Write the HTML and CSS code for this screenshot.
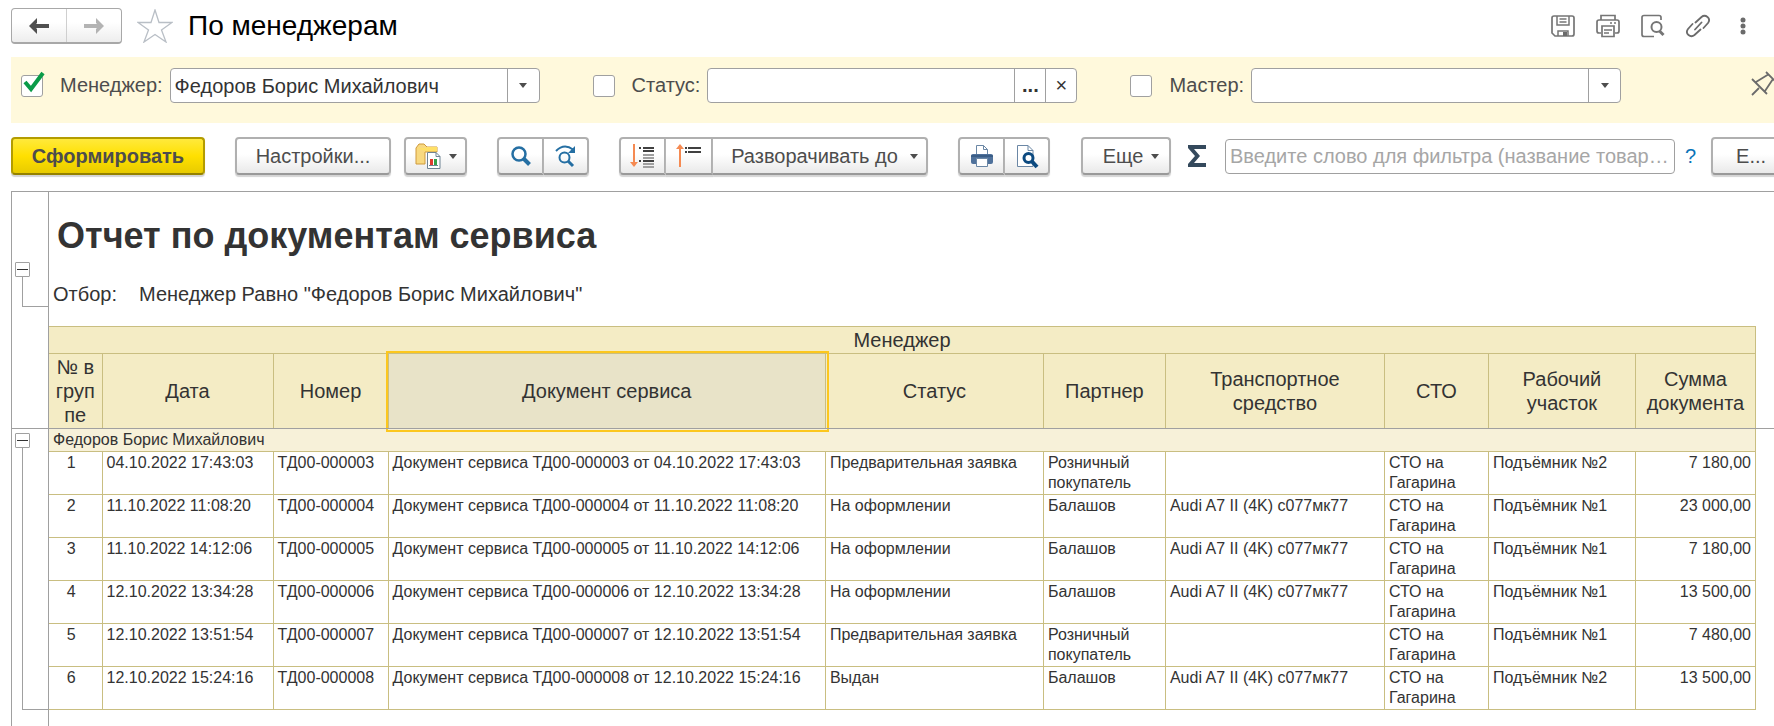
FILE: index.html
```html
<!DOCTYPE html>
<html lang="ru">
<head>
  <meta charset="UTF-8">
  <title>По менеджерам</title>
  <meta name="viewport" content="width=device-width, initial-scale=1.0">
  <link rel="stylesheet" href="styles.css">
</head>
<body>

  <header class="topbar">
    <div class="nav">
      <button class="nav-btn" type="button" aria-label="Назад">
        <svg width="22" height="18" viewBox="0 0 22 18"><path d="M9 1 1 9l8 8v-5l-1-1h13V7H8l1-1z" fill="#505050"/></svg>
      </button>
      <button class="nav-btn" type="button" aria-label="Вперед">
        <svg width="22" height="18" viewBox="0 0 22 18"><path d="M13 1l8 8-8 8v-5l1-1H1V7h13l-1-1z" fill="#b3b3b3"/></svg>
      </button>
    </div>
    <button class="icon-btn star" type="button" aria-label="В избранное">
      <svg width="36" height="34" viewBox="0 0 36 34"><path d="M18 1l4 12.500h13l-10.500 7.500 4.500 12-11-7.500-11 7.500L11.500 21 1 13.500h13z" fill="#fff" stroke="#b9bfc6" stroke-width="1.300"/></svg>
    </button>
    <h1 class="page-title">По менеджерам</h1>
    <div class="top-icons">
      <button class="icon-btn" type="button" aria-label="Сохранить">
        <svg width="26" height="24" viewBox="0 0 26 24" fill="none" stroke="#757575" stroke-width="1.700"><path d="M2 4q0-2 2-2h18q2 0 2 2v16q0 2-2 2H5l-3-3z"/><path d="M7 2v9h12V2M9.500 5h7M9.500 8h7M8 22v-5h10v5" stroke-width="1.500"/><path d="M13 18h4v4h-4z" fill="#6b6b6b" stroke="none"/></svg>
      </button>
      <button class="icon-btn" type="button" aria-label="Печать">
        <svg width="26" height="24" viewBox="0 0 26 24" fill="none" stroke="#757575" stroke-width="1.700"><path d="M6 6V1.500h14V6M6 19H4q-2 0-2-2V8q0-2 2-2h18q2 0 2 2v9q0 2-2 2h-2"/><path d="M7 12h12v10.500H7z"/><path d="M9 16h8M9 19h5M15 9h2M19 9h2" stroke-width="1.500"/></svg>
      </button>
      <button class="icon-btn" type="button" aria-label="Просмотр">
        <svg width="26" height="24" viewBox="0 0 26 24" fill="none" stroke="#757575" stroke-width="2"><path d="M21 6V3.500q0-2-2-2H4q-2 0-2 2v17q0 2 2 2h10" stroke-width="1.700"/><circle cx="16.500" cy="13" r="5"/><path d="M19.500 17l4 4" stroke-width="3"/></svg>
      </button>
      <button class="icon-btn" type="button" aria-label="Ссылка">
        <svg width="26" height="24" viewBox="0 0 26 24" fill="none" stroke="#6b6b6b" stroke-width="1.800" stroke-linecap="round"><path d="M10.500 8.500l6-5.500q3-2.500 6 0t.500 6l-4.500 5M15.500 15.500l-6 5.500q-3 2.500-6 0t-.500-6l4.500-5M10 15.500l6.500-7"/></svg>
      </button>
      <button class="icon-btn" type="button" aria-label="Меню">
        <svg width="26" height="24" viewBox="0 0 26 24" fill="#6b6b6b"><circle cx="13" cy="6" r="2.500"/><circle cx="13" cy="12" r="2.500"/><circle cx="13" cy="18" r="2.500"/></svg>
      </button>
    </div>
  </header>

  <section class="filters">
    <div class="filter">
      <label class="check">
        <input type="checkbox" checked aria-label="Использовать отбор: Менеджер">
        <svg class="tick" width="24" height="24" viewBox="0 0 24 24"><path d="M3 11l6 7L21 2" fill="none" stroke="#0a9b48" stroke-width="4"/></svg>
      </label>
      <label class="filter-label" for="manager">Менеджер:</label>
      <div class="field">
        <select id="manager"><option>Федоров Борис Михайлович</option></select>
        <span class="drop"><span class="caret"></span></span>
      </div>
    </div>
    <div class="filter">
      <label class="check">
        <input type="checkbox" aria-label="Использовать отбор: Статус">
      </label>
      <label class="filter-label" for="status">Статус:</label>
      <div class="field">
        <input class="field-text" type="text" id="status">
        <button class="field-btn dots" type="button">...</button>
        <button class="field-btn" type="button" aria-label="Очистить">×</button>
      </div>
    </div>
    <div class="filter">
      <label class="check">
        <input type="checkbox" aria-label="Использовать отбор: Мастер">
      </label>
      <label class="filter-label" for="master">Мастер:</label>
      <div class="field">
        <select id="master"><option></option></select>
        <span class="drop"><span class="caret"></span></span>
      </div>
    </div>
    <button class="icon-btn pin" type="button" aria-label="Закрепить">
      <svg width="26" height="26" viewBox="0 0 26 26" fill="none" stroke="#6b6b6b" stroke-width="1.800"><path d="M1 8l15 15M5 11l13-8M15 1l10 10M14 20l8-12M1 24l7-7"/></svg>
    </button>
  </section>

  <div class="toolbar">
    <button class="btn btn-main" type="button">Сформировать</button>
    <button class="btn btn-settings" type="button">Настройки...</button>
    <button class="btn btn-folder" type="button" aria-label="Варианты отчета">
      <svg width="26" height="26" viewBox="0 0 26 26"><path d="M1 5l3-4h5l3 3h10v5H10v12H1z" fill="#f8d980" stroke="#cf9a3c"/><path d="M2 5h9l1-1h10v4H10" fill="#ffe066"/><path d="M12.500 9.500H21l4 4v12H12.500z" fill="#fff" stroke="#6f8493"/><path d="M21 9.500v4h4" fill="none" stroke="#6f8493"/><path d="M15 16h3v6h-3z" fill="#e03a2f"/><path d="M19 16h3v6h-3z" fill="#35a04a"/><path d="M14 22.500h9" stroke="#6f8493"/></svg>
      <span class="caret"></span>
    </button>
    <div class="group group-find">
      <button class="btn" type="button" aria-label="Найти">
        <svg width="22" height="22" viewBox="0 0 22 22" fill="none" stroke="#256fa3"><circle cx="9" cy="9" r="6.500" stroke-width="2.500"/><path d="M13.500 13.500l6 6" stroke-width="4"/></svg>
      </button>
      <button class="btn" type="button" aria-label="Найти далее">
        <svg width="24" height="24" viewBox="0 0 24 24" fill="none" stroke="#256fa3"><path d="M2 7q8-8 17-1.500" stroke-width="2"/><path d="M21 2v7h-7z" fill="#256fa3" stroke="none"/><circle cx="10.500" cy="13.500" r="5" stroke-width="2"/><path d="M14 17l5 5" stroke-width="3"/></svg>
      </button>
    </div>
    <div class="group group-levels">
      <button class="btn" type="button" aria-label="Развернуть все">
        <svg width="26" height="26" viewBox="0 0 26 26"><path d="M4 1v20" stroke="#f58a52" stroke-width="2"/><path d="M0 19h8l-4 5z" fill="#f58a52"/><path d="M9 5h2M9 18h2M13 5h11M13 8h11M13 18h11" stroke="#404040" stroke-width="2"/><path d="M13 12h11M13 15h11M13 21h11M13 24h11" stroke="#a0a0a0" stroke-width="2"/></svg>
      </button>
      <button class="btn" type="button" aria-label="Свернуть все">
        <svg width="26" height="26" viewBox="0 0 26 26"><path d="M4 4v20" stroke="#f58a52" stroke-width="2"/><path d="M0 6h8L4 1z" fill="#f58a52"/><path d="M9 5h2M9 9h2M12 5h13M12 9h13" stroke="#404040" stroke-width="2"/></svg>
      </button>
      <button class="btn btn-expand" type="button">Разворачивать до <span class="caret"></span></button>
    </div>
    <div class="group group-print">
      <button class="btn" type="button" aria-label="Печать">
        <svg width="24" height="24" viewBox="0 0 24 24"><path d="M6.500 11V1.500h7l4 4V11" fill="#fff" stroke="#6b87a5"/><path d="M13.500 1.500v4h4" fill="none" stroke="#6b87a5"/><rect x="1" y="10" width="22" height="10" rx="2" fill="#4f719b"/><path d="M1 12h22" stroke="#274a73"/><path d="M6.500 14.500h11v8h-11z" fill="#fff" stroke="#6b87a5"/></svg>
      </button>
      <button class="btn" type="button" aria-label="Предварительный просмотр">
        <svg width="24" height="26" viewBox="0 0 24 26" fill="none"><path d="M2.500 2.500H13l5 5v16H2.500z" fill="#fff" stroke="#6b87a5"/><path d="M13 2.500v5h5" stroke="#6b87a5"/><circle cx="13.500" cy="15" r="4.500" fill="#fff" stroke="#0c4a80" stroke-width="3"/><path d="M17 18.500l5 5.500" stroke="#0c4a80" stroke-width="4"/></svg>
      </button>
    </div>
    <button class="btn btn-more" type="button">Еще <span class="caret"></span></button>
    <button class="icon-btn sigma" type="button" aria-label="Сумма">
      <svg width="18" height="22" viewBox="0 0 18 22"><path d="M0 0h18v4H6l6 7-6 7h12v4H0v-3l7-8-7-8z" fill="#34495c"/></svg>
    </button>
    <input class="search" type="text" aria-label="Фильтр" placeholder="Введите слово для фильтра (название товара, номер)">
    <a class="help" href="#">?</a>
    <button class="btn btn-last" type="button">Е...</button>
  </div>

  <main class="report">
    <div class="gutter">
      <div class="tree tree-head">
        <button class="toggle" type="button" aria-label="Свернуть заголовок"></button>
        <div class="branch"></div>
      </div>
      <div class="tree tree-body">
        <button class="toggle" type="button" aria-label="Свернуть группу"></button>
        <div class="branch"></div>
      </div>
    </div>
    <div class="sheet">
      <h2 class="report-title">Отчет по документам сервиса</h2>
      <p class="selection"><span class="selection-name">Отбор:</span>Менеджер Равно "Федоров Борис Михайлович"</p>
      <table class="data">
        <colgroup>
          <col class="c-num"><col class="c-date"><col class="c-code"><col class="c-doc"><col class="c-status">
          <col class="c-partner"><col class="c-car"><col class="c-sto"><col class="c-place"><col class="c-sum">
        </colgroup>
        <thead>
          <tr class="row-top"><th colspan="10">Менеджер</th></tr>
          <tr class="row-cols">
            <th>№ в<br>груп<br>пе</th>
            <th>Дата</th>
            <th>Номер</th>
            <th class="current">Документ сервиса</th>
            <th>Статус</th>
            <th>Партнер</th>
            <th>Транспортное средство</th>
            <th>СТО</th>
            <th>Рабочий участок</th>
            <th>Сумма документа</th>
          </tr>
        </thead>
        <tbody>
          <tr class="row-group"><td colspan="10">Федоров Борис Михайлович</td></tr>
          <tr><td>1</td><td>04.10.2022 17:43:03</td><td>ТД00-000003</td><td>Документ сервиса ТД00-000003 от 04.10.2022 17:43:03</td><td>Предварительная заявка</td><td>Розничный покупатель</td><td></td><td>СТО на Гагарина</td><td>Подъёмник №2</td><td>7 180,00</td></tr>
          <tr><td>2</td><td>11.10.2022 11:08:20</td><td>ТД00-000004</td><td>Документ сервиса ТД00-000004 от 11.10.2022 11:08:20</td><td>На оформлении</td><td>Балашов</td><td>Audi A7 II (4K) с077мк77</td><td>СТО на Гагарина</td><td>Подъёмник №1</td><td>23 000,00</td></tr>
          <tr><td>3</td><td>11.10.2022 14:12:06</td><td>ТД00-000005</td><td>Документ сервиса ТД00-000005 от 11.10.2022 14:12:06</td><td>На оформлении</td><td>Балашов</td><td>Audi A7 II (4K) с077мк77</td><td>СТО на Гагарина</td><td>Подъёмник №1</td><td>7 180,00</td></tr>
          <tr><td>4</td><td>12.10.2022 13:34:28</td><td>ТД00-000006</td><td>Документ сервиса ТД00-000006 от 12.10.2022 13:34:28</td><td>На оформлении</td><td>Балашов</td><td>Audi A7 II (4K) с077мк77</td><td>СТО на Гагарина</td><td>Подъёмник №1</td><td>13 500,00</td></tr>
          <tr><td>5</td><td>12.10.2022 13:51:54</td><td>ТД00-000007</td><td>Документ сервиса ТД00-000007 от 12.10.2022 13:51:54</td><td>Предварительная заявка</td><td>Розничный покупатель</td><td></td><td>СТО на Гагарина</td><td>Подъёмник №1</td><td>7 480,00</td></tr>
          <tr><td>6</td><td>12.10.2022 15:24:16</td><td>ТД00-000008</td><td>Документ сервиса ТД00-000008 от 12.10.2022 15:24:16</td><td>Выдан</td><td>Балашов</td><td>Audi A7 II (4K) с077мк77</td><td>СТО на Гагарина</td><td>Подъёмник №2</td><td>13 500,00</td></tr>
        </tbody>
      </table>
    </div>
    <div class="freeze-line"></div>
  </main>

</body>
</html>
```

FILE: styles.css
```css
* {
  box-sizing: border-box;
}
body {
  margin: 0;
  padding-left: 11px;
  min-height: 100vh;
  display: flex;
  flex-direction: column;
  overflow: hidden;
  background: #fff;
  color: #333;
  font-family: "Liberation Sans", Arial, sans-serif;
  font-size: 20px;
}
button, input, select {
  font-family: inherit;
  font-size: inherit;
  color: inherit;
  margin: 0;
}
svg {
  display: block;
  flex: none;
}
.icon-btn {
  padding: 0;
  border: none;
  background: none;
  cursor: pointer;
}

/* title row */
.topbar {
  display: flex;
  align-items: center;
  height: 57px;
  padding-right: 18px;
  padding-bottom: 5px;
}
.nav {
  display: flex;
  width: 111px;
  height: 36px;
  border: 1px solid #a8a8a8;
  border-bottom-width: 2px;
  border-radius: 4px;
  background: linear-gradient(#fff 40%, #ededed);
}
.nav-btn {
  flex: 1;
  display: flex;
  justify-content: center;
  align-items: center;
  padding: 0;
  border: none;
  background: none;
}
.nav-btn + .nav-btn {
  border-left: 1px solid #cfcfcf;
}
.star {
  margin-left: 15px;
}
.page-title {
  margin: 0 0 0 15px;
  font-size: 28px;
  font-weight: normal;
  color: #000;
}
.top-icons {
  display: flex;
  gap: 19px;
  margin-left: auto;
}

/* quick filters */
.filters {
  display: flex;
  align-items: flex-start;
  height: 66px;
  padding: 11px 0 0 10px;
  background: #fff9dc;
  overflow: hidden;
}
.filter {
  display: flex;
  align-items: center;
  flex: none;
  margin-right: 53px;
}
.check {
  position: relative;
  width: 22px;
  height: 22px;
}
.check input {
  display: block;
  width: 22px;
  height: 22px;
  appearance: none;
  border: 1px solid #a0a0a0;
  border-radius: 3px;
  background: #fff;
}
.tick {
  position: absolute;
  left: 1px;
  top: -4px;
}
.filter-label {
  margin: 0 7px 0 17px;
  color: #4d4d4d;
}
.field {
  position: relative;
  display: flex;
  width: 370px;
  height: 35px;
  border: 1px solid #a0a0a0;
  border-radius: 4px;
  background: #fff;
}
.field select, .field-text {
  flex: 1;
  min-width: 0;
  padding: 0 4px;
  appearance: none;
  border: none;
  background: none;
}
.drop {
  position: absolute;
  right: 0;
  top: 0;
  bottom: 0;
  width: 32px;
  display: flex;
  justify-content: center;
  align-items: center;
  border-left: 1px solid #a0a0a0;
  pointer-events: none;
}
.caret {
  display: inline-block;
  border: 4px solid transparent;
  border-top: 5px solid #4d4d4d;
  border-bottom: none;
}
.field-btn {
  width: 31px;
  padding: 0;
  border: none;
  border-left: 1px solid #a0a0a0;
  background: none;
}
.dots {
  font-weight: bold;
}
.pin {
  margin-left: 77px;
  margin-top: 3px;
}

/* command bar */
.toolbar {
  display: flex;
  align-items: center;
  height: 68px;
  padding-bottom: 2px;
  overflow: hidden;
  color: #4d4d4d;
}
.btn {
  display: flex;
  justify-content: center;
  align-items: center;
  flex: none;
  gap: 8px;
  height: 38px;
  padding: 0 4px;
  border: 2px solid #b0b0b0;
  border-bottom-color: #999;
  border-radius: 4px;
  background: linear-gradient(#fff 45%, #e9e9e9);
  box-shadow: 0 2px 1px #d4d4d4;
  white-space: nowrap;
}
.btn-main {
  width: 194px;
  border-color: #b39c00;
  border-bottom-color: #948100;
  background: linear-gradient(#ffe93c, #ffe000 50%, #e8cb00);
  font-weight: bold;
}
.btn-settings {
  width: 156px;
  margin-left: 30px;
}
.btn-folder {
  width: 63px;
  margin-left: 13px;
}
.group {
  display: flex;
  flex: none;
}
.group .btn {
  flex: 1;
  border-radius: 0;
}
.group .btn + .btn {
  border-left: none;
}
.group .btn:first-child {
  border-radius: 4px 0 0 4px;
}
.group .btn:last-child {
  border-radius: 0 4px 4px 0;
}
.group-find {
  width: 92px;
  margin-left: 30px;
}
.group-levels {
  width: 309px;
  margin-left: 30px;
}
.group-levels .btn {
  flex: 0 0 47px;
}
.group-levels .btn-expand {
  flex: 1;
  gap: 12px;
  padding-left: 14px;
}
.group-print {
  width: 92px;
  margin-left: 30px;
}
.btn-more {
  width: 90px;
  margin-left: 31px;
  padding-left: 14px;
}
.sigma {
  margin-left: 17px;
}
.search {
  width: 450px;
  height: 35px;
  flex: none;
  margin-left: 19px;
  padding: 0 4px;
  border: 1px solid #a0a0a0;
  border-radius: 4px;
  text-overflow: ellipsis;
}
.search::placeholder {
  color: #a6a6a6;
  opacity: 1;
}
.help {
  margin-left: 10px;
  color: #0a73b8;
  text-decoration: none;
}
.btn-last {
  width: 80px;
  margin-left: 15px;
}

/* report */
.report {
  position: relative;
  flex: 1;
  display: flex;
  border-top: 1px solid #a0a0a0;
  border-left: 1px solid #a0a0a0;
}
.gutter {
  width: 37px;
  flex: none;
  border-right: 1px solid #a0a0a0;
}
.tree {
  display: flex;
  flex-direction: column;
  padding-left: 3px;
}
.tree-head {
  height: 237px;
  padding-top: 70px;
  padding-bottom: 122px;
}
.tree-body {
  height: 281px;
  padding-top: 4px;
}
.toggle {
  width: 15px;
  height: 15px;
  flex: none;
  padding: 0;
  border: 1px solid #a0a0a0;
  border-radius: 1px;
  background: linear-gradient(#333, #333) center / 11px 1px no-repeat #fff;
}
.branch {
  flex: 1;
  margin-left: 7px;
  border-left: 1px solid #a0a0a0;
  border-bottom: 1px solid #a0a0a0;
}
.sheet {
  flex: 1;
  padding-right: 18px;
}
.report-title {
  margin: 0;
  padding: 23px 0 0 8px;
  font-size: 36px;
  line-height: 42px;
}
.selection {
  margin: 0;
  padding: 25px 0 20px 4px;
  line-height: 24px;
}
.selection-name {
  display: inline-block;
  width: 86px;
}
.data {
  width: 100%;
  table-layout: fixed;
  border-collapse: collapse;
  font-size: 16px;
  line-height: 20px;
}
.c-num { width: 53px; }
.c-date { width: 171px; }
.c-code { width: 115px; }
.c-status { width: 218px; }
.c-partner { width: 122px; }
.c-car { width: 219px; }
.c-sto { width: 104px; }
.c-place { width: 147px; }
.c-sum { width: 120px; }
.data th, .data td {
  padding: 1px 4px;
  border: 1px solid #c9be81;
  text-align: left;
  vertical-align: top;
}
.data tr > :first-child {
  border-left: none;
}
.data th {
  padding: 0 4px;
  background: #f4ecc5;
  font-size: 20px;
  font-weight: normal;
  line-height: 24px;
  text-align: center;
  vertical-align: middle;
}
.data .current {
  position: relative;
  background: #e8e3c8;
}
.current::after {
  content: "";
  position: absolute;
  inset: -3px -4px -4px -3px;
  border: 2px solid #fcc71e;
}
.row-top {
  height: 27px;
}
.row-cols {
  height: 75px;
}
.row-group {
  height: 23px;
}
.data tbody tr:not(.row-group) {
  height: 43px;
}
.data .row-group td {
  background: #f7f1d9;
}
.data tbody tr:not(.row-group) td:first-child {
  padding-right: 12px;
  text-align: center;
}
.data tbody td:last-child:not(:first-child) {
  text-align: right;
}
/* border of the frozen header area */
.freeze-line {
  position: absolute;
  left: 0;
  right: 0;
  top: 236px;
  height: 1px;
  background: #a0a0a0;
}
```
